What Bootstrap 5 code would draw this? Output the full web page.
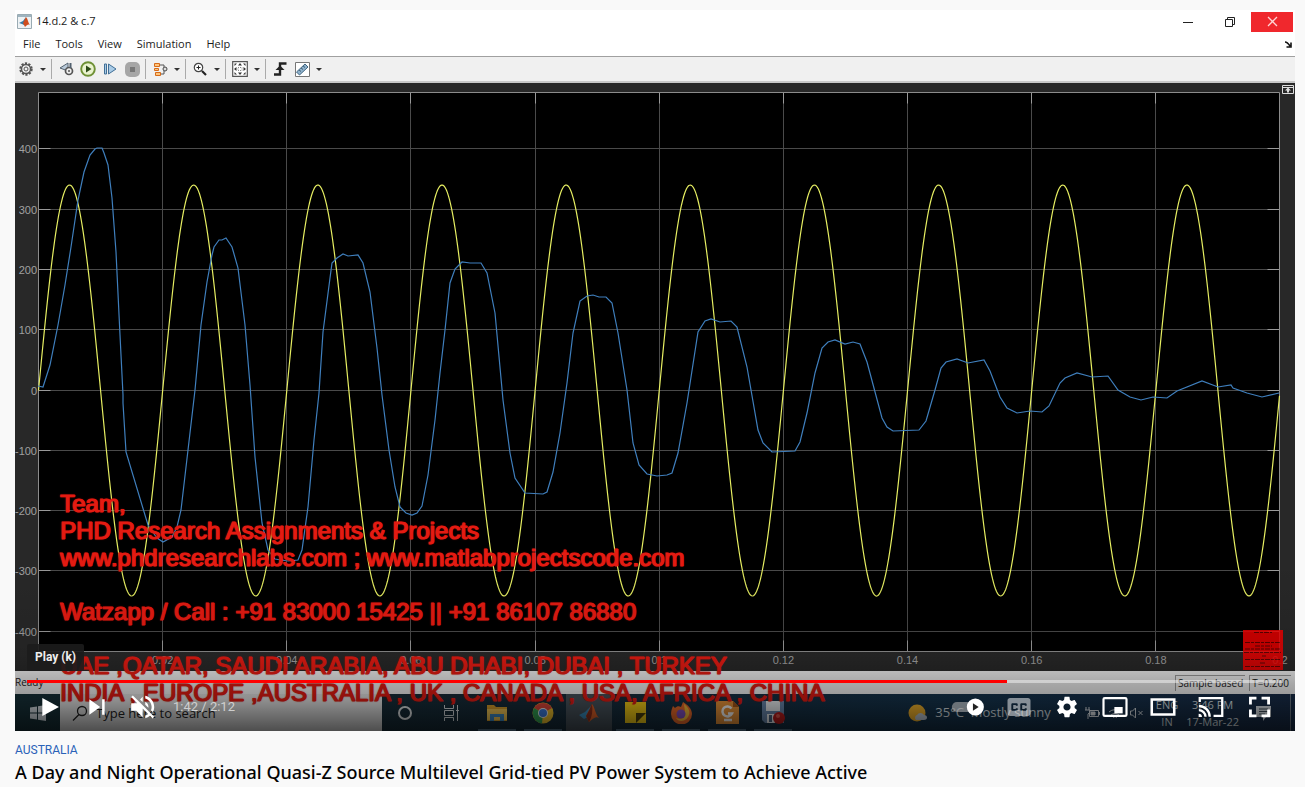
<!DOCTYPE html>
<html lang="en">
<head>
  <meta charset="UTF-8">
  <title>A Day and Night Operational Quasi-Z Source Multilevel Grid-tied PV Power System</title>
  <meta name="viewport" content="width=device-width, initial-scale=1">
  <link href="https://cdn.jsdelivr.net/npm/bootstrap@5.3.0/dist/css/bootstrap.min.css" rel="stylesheet">
  <style>
    body { background: #f9f9f9; font-family: Roboto, "Liberation Sans", sans-serif; }
    button { border: 0; padding: 0; background: none; color: inherit; }
    button svg, .task-item svg { display: block; }
    .watch-page { padding: 10px 10px 0 15px; }
    .win-font { font-family: "Open Sans", "Noto Sans", sans-serif; color: #1b1b1b; }

    /* scope window */
    .title-row { height: 23px; font-size: 11px; padding: 0 2px; }
    .win-btn { width: 42px; height: 20px; display: flex; align-items: center; justify-content: center; }
    .win-close { background: #f0282d; }
    .menu-row { height: 23px; font-size: 11px; padding: 0 3px 0 8px; gap: 15px; }
    .menu-row a { color: #1b1b1b; text-decoration: none; }
    .tool-row { height: 27px; background: #f0f0f0; border-top: 1px solid #a0a0a0; border-bottom: 2px solid #c8c8c8; }
    .tool-btn { width: 22px; height: 22px; display: flex; align-items: center; justify-content: center; }
    .tool-caret { width: 12px; height: 22px; display: flex; align-items: center; justify-content: center; }
    .tool-caret::before { content: ""; border: 3px solid transparent; border-top-color: #333; border-bottom: 0; }
    .tool-sep { width: 6px; height: 20px; background: linear-gradient(#aaa, #aaa) 2px 0 / 1px 100% no-repeat; }
    .scope { display: block; width: 100%; height: auto; background: #282828; }
    .scope text { font: 11px "Liberation Sans", sans-serif; fill: #a0a0a0; }
    .status-row { height: 23px; font-size: 10px; background: #f0f0f0; }
    .status-cell { border: 1px solid #999; border-width: 1px 0 0 1px; padding: 0 2px; line-height: 15px; margin-right: 4px; }

    /* windows taskbar */
    .task-row { height: 37px; background: linear-gradient(90deg, #163038, #172c3a 40%, #15344e 75%, #182c48); }
    .start-btn { width: 45px; display: flex; align-items: center; justify-content: center; }
    .search-wrap { width: 322px; background: #e4e4e4; padding-left: 12px; }
    .search-wrap input { border: 0; background: none; font-size: 13px; line-height: 20px; color: #222; width: 200px; padding: 0; outline: 0; }
    .search-wrap input::placeholder { color: #222; opacity: 1; }
    .search-wrap label svg { display: block; }
    .task-item { width: 46px; height: 37px; display: flex; align-items: center; justify-content: center; }
    .task-open { background: linear-gradient(#55748a, #55748a) center bottom / 38px 2px no-repeat; }
    .task-active { background: #48535c; }
    .tray { font-size: 11px; line-height: 17px; color: #dfe5ea; gap: 8px; }
    .tray-end { width: 15px; height: 37px; background: linear-gradient(#6d7a86, #6d7a86) 10px 0 / 1px 100% no-repeat; }
    .weather { gap: 7px; margin-right: 25px; font-size: 13px; }

    /* text burnt over the recording */
    .burn-text { position: absolute; left: 45px; top: 480px; font: 24px/27px "Liberation Sans", sans-serif; color: #e41b12; -webkit-text-stroke: 1px #e41b12; text-shadow: 1px 0 0 #d01a12, 0 0 2px #b01008; white-space: pre; margin: 0; overflow: visible; }
    .code-box { position: absolute; right: 12px; top: 620px; width: 40px; height: 40px; opacity: .85; }

    /* player chrome */
    .shade { position: absolute; left: 0; right: 0; bottom: 0; height: 170px; background: linear-gradient(rgba(0,0,0,0), rgba(0,0,0,.12) 55%, rgba(0,0,0,.3) 72%, rgba(0,0,0,.38) 82%, rgba(0,0,0,.66)); pointer-events: none; }
    .player-bar { position: absolute; left: 12px; right: 12px; bottom: 0; height: 51px; color: #fff; }
    .seek { display: block; width: 100%; height: 3px; margin: 0; appearance: none; background: linear-gradient(90deg, #f00 78%, rgba(255,255,255,.45) 78%); }
    .seek::-webkit-slider-thumb { appearance: none; width: 0; height: 0; }
    .player-btns { height: 48px; }
    .play-btn { width: 47px; height: 46px; }
    .side-btn { width: 48px; height: 46px; display: flex; justify-content: center; }
    .clock-text { font-size: 13px; color: #ddd; opacity: .85; padding-left: 5px; }
    .key-tip { position: absolute; left: 12px; bottom: 60px; padding: 0 8px; font-size: 12px; line-height: 27px; font-weight: 700; color: #eee; background: rgba(28,28,28,.9); border-radius: 2px; }

    .clip-info { padding-top: 10px; }
    .tag-link { font-size: 12px; line-height: 18px; color: #2a62b8; text-decoration: none; }
    .clip-title { font: 500 18px/26px "Noto Sans", sans-serif; color: #030303; margin: 0; }
  </style>
</head>
<body>

  <main class="watch-page">
    <div class="position-relative overflow-hidden">

      <div class="win-font bg-white">
        <div class="title-row d-flex align-items-center">
          <svg width="15" height="15" viewBox="0 0 15 15"><path d="M.5.5h14v14H.5z" fill="#eef2f4" stroke="#9aabb3"/><path d="M1 1h13v2H1z" fill="#9fb4bf"/><path d="M2 9l4-2 3-4-2 8-2-1z" fill="#357aa5"/><path d="M9 3c2 2 2 6 4 8-2-1-3 0-5 2L6 9z" fill="#cf4c1d"/></svg>
          <span class="ms-1">14.d.2 &amp; c.7</span>
          <div class="d-flex ms-auto">
            <button class="win-btn" aria-label="Minimize"><svg width="10" height="10"><path d="M0 5.500h10" stroke="#222"/></svg></button>
            <button class="win-btn" aria-label="Restore"><svg width="10" height="10" fill="none" stroke="#222"><path d="M.5 2.500h7v7h-7zM2.500 2.500v-2h7v7h-2"/></svg></button>
            <button class="win-btn win-close" aria-label="Close"><svg width="11" height="11"><path d="M1 1l9 9M10 1l-9 9" stroke="#ffd5d5" stroke-width="1.300"/></svg></button>
          </div>
        </div>

        <nav class="menu-row d-flex align-items-center">
          <a href="#">File</a>
          <a href="#">Tools</a>
          <a href="#">View</a>
          <a href="#">Simulation</a>
          <a href="#">Help</a>
          <svg class="ms-auto" width="8" height="7" viewBox="0 0 8 7"><path d="M1 1c2 0 3 1 5 4M7 1.500V6H2.500" fill="none" stroke="#111" stroke-width="1.600"/></svg>
        </nav>

        <div class="tool-row d-flex align-items-center">
          <button class="tool-btn" aria-label="Configuration"><svg width="14" height="14" viewBox="0 0 14 14" fill="none" stroke="#555"><circle cx="7" cy="7" r="5.700" stroke-width="2" stroke-dasharray="2.200 1.380"/><circle cx="7" cy="7" r="4.500" stroke-width="1.500"/><circle cx="7" cy="7" r="2"/></svg></button>
          <button class="tool-caret" aria-label="Configuration menu"></button>
          <span class="tool-sep"></span>
          <button class="tool-btn" aria-label="Step back"><svg width="15" height="14" viewBox="0 0 15 14"><path d="M9 1L1 6l8 3z" fill="#b9c9d8" stroke="#52616f"/><circle cx="10" cy="9" r="3.500" fill="#eee" stroke="#555" stroke-width="1.700"/><circle cx="10" cy="9" r="1" fill="#555"/><path d="M11.500 1v5" stroke="#52616f" stroke-width="2"/></svg></button>
          <button class="tool-btn" aria-label="Run"><svg width="16" height="16" viewBox="0 0 16 16"><circle cx="8" cy="8" r="6.800" fill="#eaf3cf" stroke="#6f9136" stroke-width="1.900"/><path d="M6 4.500v7L11.500 8z" fill="#2d4b17"/></svg></button>
          <button class="tool-btn" aria-label="Step forward"><svg width="13" height="12" viewBox="0 0 13 12"><path d="M.5 1h2v10h-2zM4.500 1v10L12 6z" fill="#a9cbe6" stroke="#416f96"/></svg></button>
          <button class="tool-btn" aria-label="Stop"><svg width="15" height="15"><rect width="15" height="15" rx="5" fill="#a6a6a6"/><rect x="5" y="5" width="5" height="5" fill="#777"/></svg></button>
          <span class="tool-sep"></span>
          <button class="tool-btn" aria-label="Signal selector"><svg width="15" height="15" viewBox="0 0 15 15"><path d="M6 3h5v2M5 12h6V9" fill="none" stroke="#555"/><path d="M1.500 1.500h5v3h-5zM1.500 6.500h4v2h-4zM2.500 10.500h5v3h-5z" fill="#ffc57b" stroke="#d66a19"/><circle cx="12" cy="7" r="2" fill="#ddd" stroke="#444"/></svg></button>
          <button class="tool-caret" aria-label="Signal menu"></button>
          <span class="tool-sep"></span>
          <button class="tool-btn" aria-label="Zoom"><svg width="14" height="14" viewBox="0 0 14 14" fill="none"><circle cx="5.500" cy="5.500" r="4.200" fill="#fff" stroke="#444" stroke-width="1.200"/><path d="M3.500 5.500h4M5.500 3.500v4" stroke="#222"/><path d="M9 9l4 4" stroke="#222" stroke-width="2.200"/></svg></button>
          <button class="tool-caret" aria-label="Zoom menu"></button>
          <span class="tool-sep"></span>
          <button class="tool-btn" aria-label="Fit"><svg width="16" height="16" viewBox="0 0 16 16"><path d="M.7.7h14.600v14.600H.7z" fill="#fff" stroke="#555" stroke-width="1.200"/><path d="M8 2l2 2.500H6zM8 14l2-2.500H6zM2 8l2.500-2v4zM14 8l-2.500-2v4zM2.500 2.500H5L2.500 5zM13.500 2.500V5L11 2.500zM2.500 13.500V11L5 13.500zM13.500 13.500H11l2.500-2.500z" fill="#333"/><path d="M6 6.500h4v3H6z" fill="none" stroke="#888" stroke-dasharray="1 1"/></svg></button>
          <button class="tool-caret" aria-label="Fit menu"></button>
          <span class="tool-sep"></span>
          <button class="tool-btn" aria-label="Trigger"><svg width="13" height="14" viewBox="0 0 13 14" fill="none" stroke="#222" stroke-width="2.400"><path d="M0 12.500h6v-11H12.500"/><path d="M1.500 8L6 3.500 10.500 8z" fill="#222" stroke="none"/></svg></button>
          <button class="tool-btn" aria-label="Measurements"><svg width="15" height="15" viewBox="0 0 15 15"><path d="M.5.5h14v14H.5z" fill="#fff" stroke="#777"/><path d="M1.500 10L10 2l3 3-8.500 8z" fill="#8fb2cc" stroke="#3f6480"/><path d="M4.500 8l1 1.500M6.500 6l1 1.500M8.500 4l1 1.500" stroke="#2c4a60"/></svg></button>
          <button class="tool-caret" aria-label="Measurements menu"></button>
        </div>
      </div>

      <svg class="scope" id="scope" viewBox="15 83 1280 588">
        <path d="M39 92.500H1279.500V651.500H39z" fill="#000"/>
        <g id="grid" fill="none"></g>
        <path d="M38.500 92.500H1279.500V651.500H38.500z" fill="none" stroke="#8c8c8c"/>
        <polyline id="grid-voltage" fill="none" stroke="#e6ee62" stroke-width="1.200"/>
        <polyline fill="none" stroke="#3f7fbd" stroke-width="1.200" points="38,386 43,387 50,365 58,325 65,285 71,247 78,200 84,172 90,155 95,149 97,148 102,148 104,153 108,165 112,198 116,252 120,335 123,395 123,403 126,452 148,525 157,538 163,542 172,537 177,527 181,510 188,450 195,390 201,325 207,282 212,255 214,247 219,240 222,240 226,238 228,241 232,247 238,268 245,325 250,385 255,457 262,523 268,550 275,559 288,561 298,560 302,550 308,507 314,440 319,393 323,332 330,278 332,263 337,258 343,254 348,256 358,255 363,263 370,292 377,348 382,395 389,450 395,487 400,507 406,513 412,515 417,513 422,506 428,475 435,420 440,373 445,330 450,283 455,269 462,262 470,263 481,263 487,273 495,313 503,400 510,453 515,478 525,493 543,494 547,492 553,472 560,433 567,383 573,333 580,301 587,296 593,295 599,297 606,297 612,303 618,333 627,390 633,443 639,465 647,474 657,476 667,475 672,473 678,453 687,403 698,332 705,321 711,319 720,322 731,321 737,327 747,367 758,430 763,443 772,452 795,451 800,442 807,413 815,373 822,348 828,342 835,340 845,344 853,342 860,344 867,362 882,418 887,427 893,431 919,430 926,421 935,390 941,368 946,362 957,359 968,363 984,360 990,371 1000,397 1007,408 1017,413 1030,411 1042,412 1049,406 1060,383 1065,378 1077,373 1092,377 1108,376 1118,390 1130,397 1141,400 1153,397 1167,398 1177,391 1202,381 1218,387 1231,385 1233,388 1247,393 1262,397 1279,393"/>
        <path d="M1282.500 85.500h11v8h-11zM1283 87.500h10" fill="none" stroke="#ddd"/><path d="M1288 87.500l-3 3h2v2h2v-2h2z" fill="#ddd"/>
      </svg>

      <div class="status-row win-font d-flex align-items-center">
        <span>Ready</span>
        <span class="status-cell ms-auto">Sample based</span>
        <span class="status-cell">T=0.200</span>
      </div>

      <div class="task-row win-font d-flex">
        <button class="start-btn" aria-label="Start"><svg width="16" height="16" viewBox="0 0 16 16" fill="#d8e0e6"><path d="M0 2.500L7 1.500v6H0zM8 1.300L16 0v7.500H8zM0 8.500h7v6l-7-1zM8 8.500h8V16l-8-1.300z"/></svg></button>
        <div class="search-wrap d-flex align-items-center">
          <label for="task-search"><svg width="16" height="16" viewBox="0 0 16 16" fill="none" stroke="#222" stroke-width="1.300"><circle cx="10" cy="6" r="4.500"/><path d="M7 9.500L1 15.500"/></svg></label>
          <input class="ms-2" id="task-search" type="text" placeholder="Type here to search" aria-label="Search">
        </div>
        <button class="task-item" aria-label="Cortana"><svg width="16" height="16"><circle cx="8" cy="8" r="6" fill="none" stroke="#e4e8ea" stroke-width="2"/></svg></button>
        <button class="task-item" aria-label="Task view"><svg width="17" height="16" viewBox="0 0 17 16" fill="none" stroke="#d8dde0"><path d="M1.500 0v3.500h9V0M1.500 16v-3.500h9V16M1.500 5.500h9v5h-9zM14.500 0v16M13 5.500h3"/></svg></button>
        <button class="task-item task-open" aria-label="File Explorer"><svg width="22" height="19" viewBox="0 0 22 19"><path d="M1 2h7l2 2h11v14H1z" fill="#dca22c"/><path d="M1 6h20v11H1z" fill="#f6cb58"/><path d="M4 11h14v7h-4v-4H8v4H4z" fill="#3e8cc7"/></svg></button>
        <button class="task-item task-open" aria-label="Chrome"><svg width="22" height="22" viewBox="0 0 22 22"><circle cx="11" cy="11" r="10.500" fill="#f2c32e"/><path d="M11 11L2 6a10.500 10.500 0 0 1 18 0z" fill="#df473a"/><path d="M11 11L2 6a10.500 10.500 0 0 0 8 15.500z" fill="#33a457"/><circle cx="11" cy="11" r="5" fill="#f5f5f5"/><circle cx="11" cy="11" r="4" fill="#3c7de0"/></svg></button>
        <button class="task-item task-active" aria-label="MATLAB"><svg width="22" height="20" viewBox="0 0 22 20"><path d="M1 12l6-3 7-7-4 12-4 2z" fill="#3a8dbd"/><path d="M14 1c3 3 3 10 7 14-4-2-6 1-10 4l-3-6z" fill="#df6128"/><path d="M14 1c-2 4-3 7-6 12l3 6c3-5 4-11 3-18z" fill="#8c2e1b"/></svg></button>
        <button class="task-item task-open" aria-label="Sticky Notes"><svg width="21" height="21"><path d="M0 0h21v21H0z" fill="#f7cf16"/><path d="M11 11h10L11 21z" fill="#4a400d"/></svg></button>
        <button class="task-item task-open" aria-label="Firefox"><svg width="22" height="22" viewBox="0 0 22 22"><path d="M3 4l2 2c2-2 4-2 6-1l2-5c5 3 9 7 9 12a10.500 10.500 0 0 1-21 0C1 9 2 6 3 4z" fill="#f26d2b"/><path d="M14 2c5 4 7 8 4 13-3 5-10 5-12 1 5 2 10-1 9-6z" fill="#ffc33c"/><circle cx="11" cy="12" r="4.500" fill="#8452c4"/></svg></button>
        <button class="task-item task-open" aria-label="Reader"><svg width="23" height="23" viewBox="0 0 23 23"><path d="M0 0h17l6 6v17H0z" fill="#ed963a"/><path d="M17 0v6h6z" fill="#a95617"/><path d="M15.500 7.500a5 5 0 1 0 .5 5h-4M8 19h8" fill="none" stroke="#fff" stroke-width="2.500"/></svg></button>
        <button class="task-item task-open" aria-label="Recorder"><svg width="23" height="23" viewBox="0 0 23 23"><path d="M0 0h22v22H3l-3-3z" fill="#6b8ab0"/><path d="M4 0h14v10H4zM5 13h12v9H5z" fill="#eef2f5"/><path d="M7 14h3v7H7z" fill="#4d6684"/><circle cx="17" cy="17" r="6" fill="#c01c1c"/><circle cx="16" cy="15" r="2" fill="#e85a50"/></svg></button>

        <div class="tray d-flex align-items-center ms-auto">
          <div class="weather d-flex align-items-center">
            <svg width="20" height="18" viewBox="0 0 20 18"><circle cx="9" cy="9" r="8.500" fill="#f6b62d"/><path d="M8 16a3 3 0 0 1 1-5 4 4 0 0 1 7 0c4 0 4 5 0 5z" fill="#c2ccd8"/></svg>
            <span>35°C&nbsp; Mostly sunny</span>
          </div>
          <svg width="16" height="12" viewBox="0 0 16 12" fill="none" stroke="#dfe5ea"><path d="M5.500 3.500h9v6h-9zM15.500 5v3M2 0v3M5 0v3M1 3h5v2L4 7v5"/><path d="M7 5h4v3H7z" fill="#dfe5ea"/></svg>
          <svg width="14" height="12" viewBox="0 0 14 12" fill="none" stroke="#dfe5ea"><path d="M1 5a9 9 0 0 1 12 0M3 8a6 6 0 0 1 8 0M5 10.500a3 3 0 0 1 4 0"/></svg>
          <svg width="14" height="12" viewBox="0 0 14 12" fill="none" stroke="#dfe5ea"><path d="M.5 4h2l3-3v10l-3-3h-2zM8.500 4l4 4M12.500 4l-4 4"/></svg>
          <div class="text-center ps-1">ENG<br>IN</div>
          <div class="text-center me-2">3:46 PM<br>17-Mar-22</div>
          <svg width="17" height="16" viewBox="0 0 17 16"><path d="M1 1h15v11h-5l-3 4v-4H1z" fill="#dfe5ea"/><path d="M4 4h9M4 6.500h9M4 9h6" stroke="#41505c"/></svg>
          <span class="tray-end"></span>
        </div>
      </div>

      <pre class="burn-text">Team,
PHD Research Assignments &amp; Projects
www.phdresearchlabs.com ; www.matlabprojectscode.com

Watzapp / Call : +91 83000 15425 || +91 86107 86880

UAE ,QATAR, SAUDI ARABIA, ABU DHABI, DUBAI , TURKEY
INDIA , EUROPE ,AUSTRALIA , UK , CANADA , USA, AFRICA , CHINA</pre>
      <svg class="code-box" viewBox="0 0 40 40"><path d="M0 0h40v40H0z" fill="#f80000"/><path d="M11 2.500h18M2 12.500h36M12 16h17M2 19h36M1 22.500h37M19 26h4M2 29.500h36M17 33h6M2 36.500h36" stroke="#6b0000" stroke-dasharray="5 1 3 1"/></svg>

      <div class="shade"></div>
      <div class="key-tip">Play (k)</div>

      <div class="player-bar">
        <input class="seek" type="range" min="0" max="132" value="103" aria-label="Seek">
        <div class="player-btns d-flex align-items-center">
          <button class="play-btn" aria-label="Play"><svg width="46" height="46" viewBox="0 0 36 36" fill="#fff"><path d="M12 25l13-7-13-7z"/></svg></button>
          <button class="play-btn" aria-label="Next"><svg width="46" height="46" viewBox="0 0 36 36" fill="#fff"><path d="M12 24l8.500-6L12 12zM22 12v12h2V12z"/></svg></button>
          <button class="play-btn" aria-label="Unmute"><svg width="46" height="46" viewBox="0 0 36 36" fill="#fff"><path d="m 21.480,17.980 c 0,-1.770 -1.020,-3.290 -2.500,-4.030 v 2.210 l 2.450,2.450 c .03,-0.200 .05,-0.410 .05,-0.630 z m 2.500,0 c 0,.94 -0.200,1.820 -0.540,2.640 l 1.510,1.510 c .66,-1.240 1.030,-2.650 1.030,-4.150 0,-4.280 -2.990,-7.860 -7,-8.760 v 2.050 c 2.890,.86 5,3.540 5,6.710 z M 9.250,8.980 l -1.270,1.260 4.720,4.730 H 7.980 v 6 H 11.980 l 5,5 v -6.730 l 4.250,4.250 c -0.670,.52 -1.420,.93 -2.250,1.180 v 2.060 c 1.380,-0.310 2.630,-0.950 3.690,-1.810 l 2.040,2.050 1.270,-1.270 -9,-9 -7.720,-7.720 z m 7.720,.99 -2.090,2.080 2.090,2.090 V 9.980 z"/></svg></button>
          <span class="clock-text">1:42 / 2:12</span>

          <div class="d-flex ms-auto">
            <button class="side-btn" aria-label="Autoplay"><svg width="46" height="46" viewBox="0 0 36 36"><rect x="3" y="14" width="20" height="8" rx="4" fill="#aaa" opacity=".6"/><circle cx="21.400" cy="18" r="6.700" fill="#fff"/><path d="M19.500 15v6l4.500-3z" fill="#222"/></svg></button>
            <button class="side-btn" aria-label="Subtitles"><svg width="46" height="46" viewBox="0 0 36 36" fill="#fff" fill-rule="evenodd" opacity=".5"><path d="M11 11C9.900 11 9 11.900 9 13v10c0 1.100.9 2 2 2h14c1.100 0 2-.9 2-2V13c0-1.100-.9-2-2-2zM17 17h-1.500v-.5h-2v3h2V19H17v1c0 .6-.4 1-1 1h-3c-.6 0-1-.4-1-1v-4c0-.6.4-1 1-1h3c.6 0 1 .4 1 1zM24 17h-1.500v-.5h-2v3h2V19H24v1c0 .6-.4 1-1 1h-3c-.6 0-1-.4-1-1v-4c0-.6.4-1 1-1h3c.6 0 1 .4 1 1z"/></svg></button>
            <button class="side-btn" aria-label="Settings"><svg width="46" height="46" viewBox="0 0 36 36" fill="#fff"><path d="m 23.940,18.780 c .03,-0.250 .05,-0.510 .05,-0.780 0,-0.270 -0.020,-0.520 -0.050,-0.780 l 1.680,-1.320 c .15,-0.120 .19,-0.330 .09,-0.510 l -1.600,-2.760 c -0.090,-0.170 -0.310,-0.240 -0.480,-0.170 l -1.990,.8 c -0.410,-0.320 -0.860,-0.580 -1.350,-0.780 l -0.300,-2.120 c -0.020,-0.190 -0.190,-0.330 -0.390,-0.330 l -3.200,0 c -0.200,0 -0.360,.14 -0.390,.33 l -0.300,2.120 c -0.480,.2 -0.930,.47 -1.350,.78 l -1.990,-0.800 c -0.180,-0.070 -0.390,0 -0.480,.17 l -1.600,2.760 c -0.100,.17 -0.050,.39 .09,.51 l 1.680,1.320 c -0.030,.25 -0.050,.52 -0.050,.78 0,.26 .02,.52 .05,.78 l -1.680,1.320 c -0.150,.12 -0.190,.33 -0.090,.51 l 1.600,2.760 c .09,.17 .31,.24 .48,.17 l 1.990,-0.800 c .41,.32 .86,.58 1.350,.78 l .3,2.120 c .02,.19 .19,.33 .39,.33 l 3.200,0 c .2,0 .36,-0.140 .39,-0.330 l .3,-2.120 c .48,-0.200 .93,-0.470 1.350,-0.780 l 1.990,.8 c .18,.07 .39,0 .48,-0.170 l 1.600,-2.760 c .09,-0.170 .05,-0.390 -0.090,-0.510 l -1.680,-1.320 z m -5.940,2.010 c -1.540,0 -2.800,-1.250 -2.800,-2.800 0,-1.540 1.250,-2.800 2.800,-2.800 1.540,0 2.800,1.250 2.800,2.800 0,1.540 -1.250,2.800 -2.800,2.800 z"/></svg></button>
            <button class="side-btn" aria-label="Miniplayer"><svg width="46" height="46" viewBox="0 0 36 36"><rect x="9" y="11" width="18" height="14" rx="1" fill="none" stroke="#fff" stroke-width="1.700"/><path d="M17.500 18h6.500v5h-6.500z" fill="#fff"/></svg></button>
            <button class="side-btn" aria-label="Theater mode"><svg width="46" height="46" viewBox="0 0 36 36"><path d="M9.200 12.200h17.600v11.600H9.200z" fill="none" stroke="#fff" stroke-width="2"/></svg></button>
            <button class="side-btn" aria-label="Cast"><svg width="46" height="46" viewBox="0 0 36 36" fill="none" stroke="#fff" stroke-width="1.800"><path d="M9.200 14v-3h17.600v14H20M8.500 17.200a8.500 8.500 0 0 1 8.500 8.500M8.500 20.500a5.200 5.200 0 0 1 5.200 5.200"/><path d="M8.300 23.200a2.600 2.600 0 0 1 2.600 2.600H8.300z" fill="#fff" stroke="none"/></svg></button>
            <button class="side-btn" aria-label="Full screen"><svg width="46" height="46" viewBox="0 0 36 36" fill="none" stroke="#fff" stroke-width="2.200"><path d="M11.300 16v-5h4.700M20 11h5.500V16M25.500 20v5H20M16 25h-4.700V20"/></svg></button>
          </div>
        </div>
      </div>
    </div>

    <div class="clip-info">
      <a class="tag-link d-block" href="#">AUSTRALIA</a>
      <h1 class="clip-title">A Day and Night Operational Quasi-Z Source Multilevel Grid-tied PV Power System to Achieve Active</h1>
    </div>
  </main>

  <script src="https://cdn.jsdelivr.net/npm/bootstrap@5.3.0/dist/js/bootstrap.bundle.min.js"></script>
  <script>
    const left = 38.5, right = 1279.5, top0 = 92.5, bottom = 651.5, zero = 390.5;
    const stepX = 124.15, stepY = 60.3;
    let marks = "";

    for (let i = 1; i < 10; i++) {
      const x = Math.floor(left + i * stepX) + 0.5;
      marks += `<path d="M${x} ${top0}V${bottom}" stroke="#4a4a4a"/>`;
      marks += `<path d="M${x} ${top0}v11M${x} ${bottom}v-11" stroke="#999"/>`;
    }
    for (let i = 1; i <= 10; i++) {
      marks += `<text x="${left + i * stepX}" y="664" text-anchor="middle">${+(i * 0.02).toFixed(2)}</text>`;
    }
    for (let v = -4; v <= 4; v++) {
      const y = Math.round(zero - v * stepY) - 0.5;
      marks += `<path d="M${left} ${y}H${right}" stroke="#4a4a4a"/>`;
      marks += `<path d="M${left} ${y}h12M${right} ${y}h-12" stroke="#999"/>`;
      marks += `<text x="37" y="${y + 4}" text-anchor="end">${v * 100}</text>`;
    }
    document.getElementById("grid").innerHTML = marks;

    // 50 Hz grid voltage, ten cycles
    const wave = [];
    for (let x = 0; x <= right - left; x++) {
      wave.push((left + x) + "," + (zero - 205.5 * Math.sin(2 * Math.PI * x / stepX)).toFixed(1));
    }
    document.getElementById("grid-voltage").setAttribute("points", wave.join(" "));
  </script>
</body>
</html>
